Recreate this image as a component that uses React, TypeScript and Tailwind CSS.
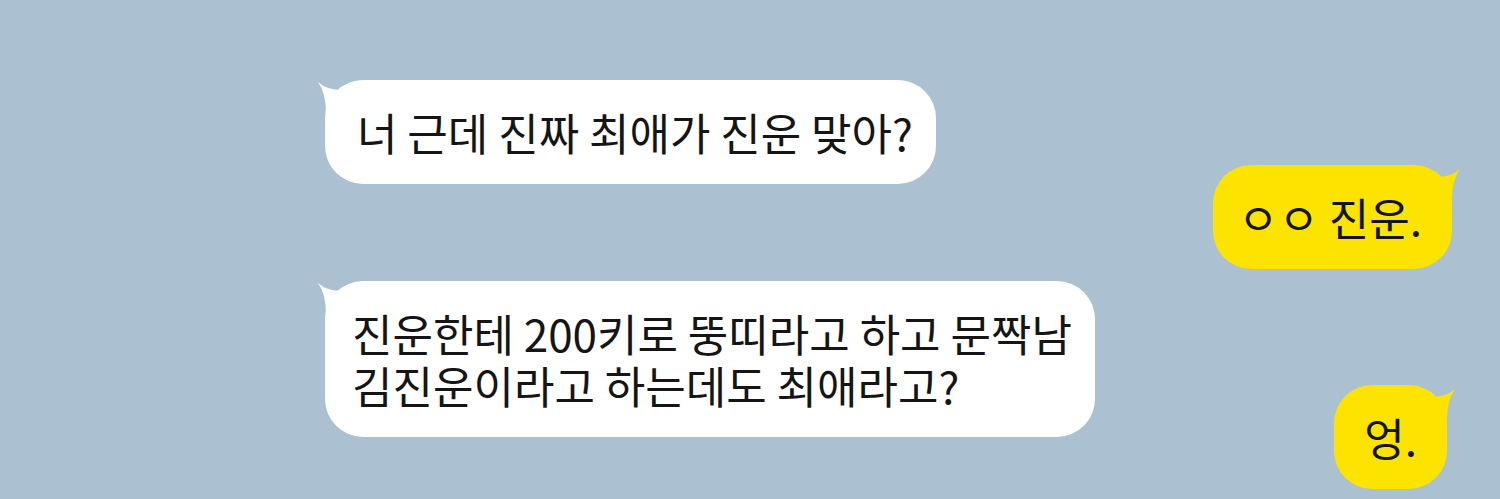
import React from 'react';

type Side = 'left' | 'right';

function Tail({ side }: { side: Side }) {
  if (side === 'left') {
    return (
      <svg className="absolute -left-[8px] top-[1px]" width="32" height="32" viewBox="0 0 32 32">
        <path d="M1 1 Q11 10 28 9 L28 32 L9 32 Q9 12 1 1 Z" fill="#ffffff" />
      </svg>
    );
  }
  return (
    <svg className="absolute -right-[9px] top-[3px]" width="32" height="32" viewBox="0 0 32 32">
      <path d="M31 1 Q21 10 4 9 L4 32 L23 32 Q23 12 31 1 Z" fill="#fde300" />
    </svg>
  );
}

function Bubble({
  side,
  children,
  className,
}: {
  side: Side;
  children: React.ReactNode;
  className: string;
}) {
  const color = side === 'left' ? 'bg-white' : 'bg-[#fde300]';
  return (
    <div className={`relative ${className}`}>
      <Tail side={side} />
      <div
        className={`relative ${color} rounded-[38px] py-[26px] text-[44px] leading-[52px] text-[#151515] whitespace-pre`}
      >
        {children}
      </div>
    </div>
  );
}

export default function App() {
  return (
    <div
      className="w-[1500px] h-[499px] overflow-hidden bg-[#abc0d0] flex flex-col pt-[80px]"
      style={{ fontFamily: '"Noto Sans CJK KR", "Noto Sans", sans-serif' }}
    >
      <Bubble side="left" className="self-start ml-[325px]">
        <div className="pl-[32px] pr-[23px]">너 근데 진짜 최애가 진운 맞아?</div>
      </Bubble>
      <Bubble side="right" className="self-end mr-[48px] -mt-[19px]">
        <div className="pl-[25px] pr-[30px]">ㅇㅇ 진운.</div>
      </Bubble>
      <Bubble side="left" className="self-start ml-[325px] mt-[12px]">
        <div className="pl-[27px] pr-[23px]">
          {'진운한테 200키로 뚱띠라고 하고 문짝남\n김진운이라고 하는데도 최애라고?'}
        </div>
      </Bubble>
      <Bubble side="right" className="self-end mr-[53px] -mt-[52px]">
        <div className="pl-[30px] pr-[30px]">엉.</div>
      </Bubble>
    </div>
  );
}
